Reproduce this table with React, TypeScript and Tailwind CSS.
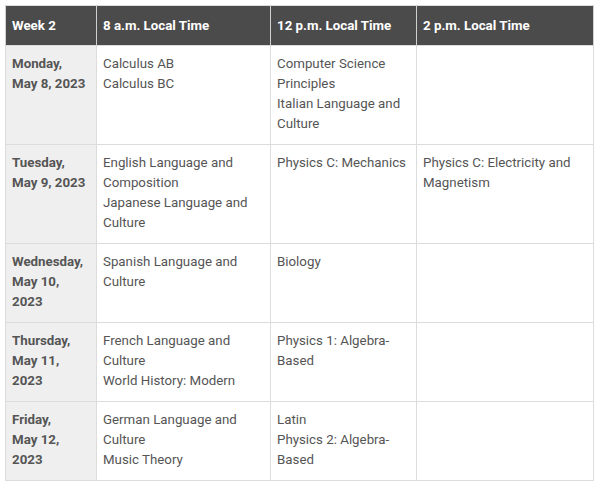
const columns = ['Week 2', '8 a.m. Local Time', '12 p.m. Local Time', '2 p.m. Local Time']

const rows = [
  {
    day: ['Monday,', 'May 8, 2023'],
    slots: [['Calculus AB', 'Calculus BC'], ['Computer Science Principles', 'Italian Language and Culture'], []]
  },
  {
    day: ['Tuesday,', 'May 9, 2023'],
    slots: [
      ['English Language and Composition', 'Japanese Language and Culture'],
      ['Physics C: Mechanics'],
      ['Physics C: Electricity and Magnetism']
    ]
  },
  {
    day: ['Wednesday,', 'May 10,', '2023'],
    slots: [['Spanish Language and Culture'], ['Biology'], []]
  },
  {
    day: ['Thursday,', 'May 11,', '2023'],
    slots: [['French Language and Culture', 'World History: Modern'], ['Physics 1: Algebra-Based'], []]
  },
  {
    day: ['Friday,', 'May 12,', '2023'],
    slots: [['German Language and Culture', 'Music Theory'], ['Latin', 'Physics 2: Algebra-Based'], []]
  }
]

export default function App() {
  return (
    <div className="min-h-screen bg-white p-[5px] font-['Roboto','Liberation_Sans',sans-serif] text-[13.3px] leading-5">
      <table className="w-[588px] table-fixed border-collapse border border-[#dcdcdc]">
        <colgroup>
          <col className="w-[91px]" />
          <col className="w-[174px]" />
          <col className="w-[146px]" />
          <col className="w-[177px]" />
        </colgroup>
        <thead>
          <tr className="bg-[#4b4b4b] text-white">
            {columns.map(col => (
              <th key={col} className="h-10 border-x border-[#d0d0d0] px-[6px] text-left align-middle font-bold">
                {col}
              </th>
            ))}
          </tr>
        </thead>
        <tbody className="text-[#555]">
          {rows.map(row => (
            <tr key={row.day[0]}>
              <td className="border border-[#dcdcdc] bg-[#efefef] px-[6px] pt-2 pb-[10px] align-top font-bold">
                {row.day.map(line => (
                  <div key={line}>{line}</div>
                ))}
              </td>
              {row.slots.map((courses, i) => (
                <td key={i} className="border border-[#dcdcdc] px-[6px] pt-2 pb-[10px] align-top">
                  {courses.map(course => (
                    <div key={course}>{course}</div>
                  ))}
                </td>
              ))}
            </tr>
          ))}
        </tbody>
      </table>
    </div>
  )
}
